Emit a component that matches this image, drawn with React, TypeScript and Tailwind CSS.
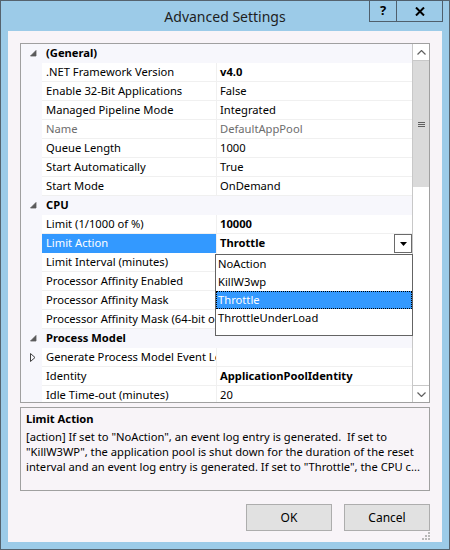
import React from 'react';

type Row = {
    label: string;
    value?: string;
    category?: boolean;
    bold?: boolean;
    muted?: boolean;
    collapsed?: boolean;
    selected?: boolean;
};

const rows: Row[] = [
    { label: '(General)', category: true },
    { label: '.NET Framework Version', value: 'v4.0', bold: true },
    { label: 'Enable 32-Bit Applications', value: 'False' },
    { label: 'Managed Pipeline Mode', value: 'Integrated' },
    { label: 'Name', value: 'DefaultAppPool', muted: true },
    { label: 'Queue Length', value: '1000' },
    { label: 'Start Automatically', value: 'True' },
    { label: 'Start Mode', value: 'OnDemand' },
    { label: 'CPU', category: true },
    { label: 'Limit (1/1000 of %)', value: '10000', bold: true },
    { label: 'Limit Action', value: 'Throttle', bold: true, selected: true },
    { label: 'Limit Interval (minutes)', value: '' },
    { label: 'Processor Affinity Enabled', value: '' },
    { label: 'Processor Affinity Mask', value: '' },
    { label: 'Processor Affinity Mask (64-bit option)', value: '' },
    { label: 'Process Model', category: true },
    { label: 'Generate Process Model Event Log Entry', value: '', collapsed: true },
    { label: 'Identity', value: 'ApplicationPoolIdentity', bold: true },
    { label: 'Idle Time-out (minutes)', value: '20' },
];

const options = ['NoAction', 'KillW3wp', 'Throttle', 'ThrottleUnderLoad'];

const font = { fontFamily: '"Segoe UI", "Noto Sans", sans-serif' };

const Expander = ({ collapsed }: { collapsed?: boolean }) =>
    collapsed ? (
        <svg width="8" height="9" viewBox="0 0 8 9">
            <path d="M1.5 0.5 L6 4.5 L1.5 8.5 Z" fill="none" stroke="#404040" strokeWidth="1" />
        </svg>
    ) : (
        <svg width="7" height="7" viewBox="0 0 7 7">
            <path d="M6 0.5 L6 6 L0.5 6 Z" fill="#5a5a5a" stroke="#5a5a5a" strokeWidth="0.8" />
        </svg>
    );

const GridRow = ({ row }: { row: Row }) => {
    if (row.category) {
        return (
            <div className="flex h-[19px] items-center bg-[#f7f7fc]">
                <div className="flex w-[21px] shrink-0 justify-center pl-[3px]">
                    <Expander />
                </div>
                <span className="pl-[4px] font-bold text-black">{row.label}</span>
            </div>
        );
    }
    return (
        <div className="flex h-[19px]">
            <div className="flex w-[21px] shrink-0 items-center justify-center bg-[#f7f7fc] pl-[3px]">
                {row.collapsed && <Expander collapsed />}
            </div>
            <div
                className={`flex w-[175px] shrink-0 items-center overflow-hidden whitespace-nowrap border-r border-[#f0f0f0] pl-[4px] ${
                    row.selected ? 'bg-[#3399ff] text-white' : 'border-b bg-white'
                } ${row.muted ? 'text-[#6d6d6d]' : ''}`}
            >
                {row.label}
            </div>
            <div
                className={`relative flex flex-1 items-center whitespace-nowrap bg-white pl-[3px] ${
                    row.selected ? '' : 'border-b border-[#f0f0f0]'
                } ${row.bold ? 'font-bold' : ''} ${row.muted ? 'text-[#6d6d6d]' : ''}`}
            >
                {row.value}
                {row.selected && (
                    <div className="absolute right-0 top-0 flex h-[19px] w-[18px] items-center justify-center border border-[#6a6a6a] bg-white">
                        <svg width="7" height="4" viewBox="0 0 7 4">
                            <path d="M0 0 H7 L3.5 4 Z" fill="#000" />
                        </svg>
                    </div>
                )}
            </div>
        </div>
    );
};

const Scrollbar = () => (
    <div className="flex w-[17px] shrink-0 flex-col border-l border-[#c8c8c8] bg-white">
        <div className="flex h-[17px] items-center justify-center border-b border-[#c8c8c8]">
            <svg width="9" height="5" viewBox="0 0 9 5">
                <path d="M0.5 4.5 L4.5 0.5 L8.5 4.5" fill="none" stroke="#606060" strokeWidth="1.2" />
            </svg>
        </div>
        <div className="flex h-[126px] items-center justify-center bg-[#dadada]">
            <div className="flex flex-col gap-[1px]">
                <div className="h-px w-[7px] bg-[#606060]" />
                <div className="h-px w-[7px] bg-[#606060]" />
                <div className="h-px w-[7px] bg-[#606060]" />
            </div>
        </div>
        <div className="flex-1" />
        <div className="flex h-[17px] items-center justify-center border-t border-[#c8c8c8]">
            <svg width="9" height="5" viewBox="0 0 9 5">
                <path d="M0.5 0.5 L4.5 4.5 L8.5 0.5" fill="none" stroke="#606060" strokeWidth="1.2" />
            </svg>
        </div>
    </div>
);

export default function App() {
    return (
        <div
            className="flex h-[550px] w-[450px] flex-col border border-[#55636e] bg-[#9ccbe8] text-[11.2px] text-black"
            style={font}
        >
            {/* Title bar */}
            <div className="relative flex h-[30px] shrink-0 items-center justify-center">
                <span className="text-[14px] text-[#1e1e1e]">Advanced Settings</span>
                <div className="absolute right-[6px] top-[-1px] flex h-[22px]">
                    <div className="flex w-[28px] items-center justify-center border border-[#4f5f6c] text-[13px] font-bold">?</div>
                    <div className="flex w-[46px] items-center justify-center border border-l-0 border-[#4f5f6c]">
                        <svg width="10" height="9" viewBox="0 0 10 9">
                            <path d="M1 0.5 L9 8.5 M9 0.5 L1 8.5" stroke="#000" strokeWidth="2" />
                        </svg>
                    </div>
                </div>
            </div>

            {/* Client */}
            <div className="mx-[7px] mb-[7px] flex flex-1 flex-col bg-[#f8f4f8] px-[12px] pt-[12px]">
                {/* Property grid */}
                <div className="relative flex h-[360px] border border-[#a0a0a0] bg-white">
                    <div className="flex-1 overflow-hidden">
                        {rows.map((r) => (
                            <GridRow key={r.label} row={r} />
                        ))}
                    </div>
                    <Scrollbar />

                    {/* Dropdown list */}
                    <div className="absolute left-[194px] top-[210px] h-[82px] w-[198px] border border-[#646464] bg-white">
                        {options.map((o) => (
                            <div
                                key={o}
                                className={`flex h-[18px] items-center pl-[2px] ${
                                    o === 'Throttle'
                                        ? 'bg-[#3399ff] text-white outline-1 -outline-offset-1 outline-dotted outline-[#000]'
                                        : ''
                                }`}
                            >
                                {o}
                            </div>
                        ))}
                    </div>
                </div>

                {/* Description */}
                <div className="mt-[4px] h-[84px] border border-[#a0a0a0] px-[5px] pt-[3px] leading-[15px]">
                    <div className="mb-[3px] font-bold">Limit Action</div>
                    <div className="whitespace-pre">[action] If set to "NoAction", an event log entry is generated.  If set to</div>
                    <div className="whitespace-pre">"KillW3WP", the application pool is shut down for the duration of the reset</div>
                    <div className="whitespace-pre">interval and an event log entry is generated. If set to "Throttle", the CPU c...</div>
                </div>

                {/* Buttons */}
                <div className="mt-[13px] flex justify-end gap-[12px] text-[12px]">
                    <button className="h-[27px] w-[86px] border border-[#adadad] bg-[#e1e1e1]">OK</button>
                    <button className="h-[27px] w-[86px] border border-[#adadad] bg-[#e1e1e1]">Cancel</button>
                </div>
                <div className="mt-auto flex justify-end pb-[2px]">
                    <svg width="8" height="8" viewBox="0 0 8 8">
                        <g fill="#b8b8b8">
                            <rect x="6" y="0" width="2" height="2" />
                            <rect x="3" y="3" width="2" height="2" />
                            <rect x="6" y="3" width="2" height="2" />
                            <rect x="0" y="6" width="2" height="2" />
                            <rect x="3" y="6" width="2" height="2" />
                            <rect x="6" y="6" width="2" height="2" />
                        </g>
                    </svg>
                </div>
            </div>
        </div>
    );
}
